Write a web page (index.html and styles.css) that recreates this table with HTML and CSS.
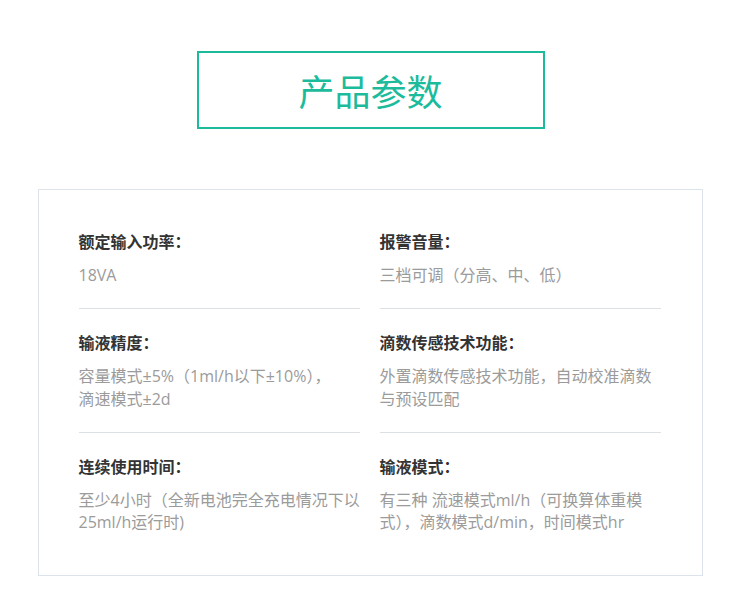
FILE: index.html
```html
<!DOCTYPE html>
<html lang="zh-CN">
<head>
<meta charset="utf-8">
<title>产品参数</title>
<link rel="stylesheet" href="styles.css">
</head>
<body>
<div class="page">
  <div class="title-box"><h1 class="title">产品参数</h1></div>
  <div class="card">
    <div class="grid">
      <div class="item">
        <div class="label">额定输入功率：</div>
        <div class="value">18VA</div>
      </div>
      <div class="item">
        <div class="label">报警音量：</div>
        <div class="value">三档可调（分高、中、低）</div>
      </div>
      <div class="item">
        <div class="label">输液精度：</div>
        <div class="value">容量模式±5%（1ml/h以下±10%），<br>滴速模式±2d</div>
      </div>
      <div class="item">
        <div class="label">滴数传感技术功能：</div>
        <div class="value">外置滴数传感技术功能，自动校准滴数<br>与预设匹配</div>
      </div>
      <div class="item last">
        <div class="label">连续使用时间：</div>
        <div class="value">至少4小时（全新电池完全充电情况下以<br>25ml/h运行时)</div>
      </div>
      <div class="item last">
        <div class="label">输液模式：</div>
        <div class="value">有三种 流速模式ml/h（可换算体重模<br>式），滴数模式d/min，时间模式hr</div>
      </div>
    </div>
  </div>
</div>
</body>
</html>
```

FILE: styles.css
```css
html, body {
  margin: 0;
  padding: 0;
  background: #ffffff;
}

body {
  font-family: "Open Sans", "Noto Sans CJK SC", sans-serif;
}

.page {
  width: 740px;
  padding-top: 51px;
  display: flex;
  flex-direction: column;
  align-items: center;
}

.title-box {
  box-sizing: border-box;
  width: 348px;
  height: 78px;
  border: 2px solid #1bbb9b;
  display: flex;
  align-items: center;
  justify-content: center;
  margin-left: 1px;
}

.title {
  margin: 0;
  font-family: "Noto Sans CJK SC", sans-serif;
  font-size: 36px;
  font-weight: normal;
  line-height: 40px;
  color: #1bbb9b;
}

.card {
  box-sizing: border-box;
  width: 665px;
  margin-top: 60px;
  border: 1px solid #dde3ea;
  padding: 18px 41px 20px 40px;
}

.grid {
  display: grid;
  grid-template-columns: 281px 281px;
  column-gap: 20px;
}

.item {
  padding: 22px 0 21.5px;
  border-bottom: 1px solid #dde1e6;
}

.item.last {
  border-bottom: none;
}

.label {
  font-size: 16px;
  line-height: 24px;
  font-weight: bold;
  color: #333333;
}

.value {
  margin-top: 10px;
  font-size: 16px;
  line-height: 22.5px;
  color: #9b9b9b;
  white-space: nowrap;
}
```
